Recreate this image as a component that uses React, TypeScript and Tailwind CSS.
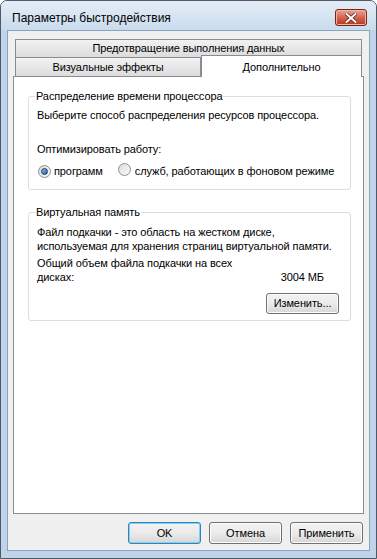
import React from 'react';

const font = { fontFamily: '"Liberation Sans", Arial, sans-serif' };

const Radio = ({ checked }: { checked?: boolean }) => (
  <span className="relative inline-flex h-[13px] w-[13px] shrink-0 items-center justify-center rounded-full border border-[#8f8f8f] bg-gradient-to-br from-[#dcdcdc] to-[#fbfbfb]">
    {checked && (
      <span className="h-[7px] w-[7px] rounded-full border border-[#1b3e6e] bg-gradient-to-br from-[#8fc1ef] to-[#1e5b9e]" />
    )}
  </span>
);

const WinButton = ({ label, focused }: { label: string; focused?: boolean }) => (
  <button
    className={
      'flex h-[22px] w-[73px] items-center justify-center rounded-[3px] border bg-gradient-to-b from-[#f2f2f2] via-[#ebebeb] to-[#d6d6d6] text-[11px] tracking-[-0.1px] text-black ' +
      (focused ? 'border-[#3c7fb1] shadow-[inset_0_0_0_1px_#7fd0ff]' : 'border-[#707070] shadow-[inset_0_0_0_1px_#fcfcfc]')
    }
  >
    {label}
  </button>
);

export default function App() {
  return (
    <div className="h-[559px] w-[377px] whitespace-nowrap bg-white text-[11px] tracking-[-0.1px]" style={font}>
      <div className="flex h-full w-full flex-col rounded-t-[7px] border border-[#4d5a66] bg-[#bfd4ea]">
        {/* title bar */}
        <div className="flex h-[29px] shrink-0 items-start justify-between rounded-t-[6px] bg-gradient-to-b from-[#e4edf7] to-[#c9dbee] pl-[11px] pr-[9px] pt-[8px]">
          <span className="mt-[1px] text-[12px] leading-[16px] tracking-normal text-black">Параметры быстродействия</span>
          <div className="flex h-[17px] w-[32px] items-center justify-center rounded-[3px] border border-[#7a2418] bg-gradient-to-b from-[#e9a394] via-[#d4644e] to-[#b8321c] shadow-[inset_0_0_0_1px_#f0b3a6]">
            <svg width="12" height="10" viewBox="0 0 12 10">
              <path d="M1.5 1 L10.5 9 M10.5 1 L1.5 9" stroke="#5a1a10" strokeWidth="3.4" strokeLinecap="square" />
              <path d="M1.5 1 L10.5 9 M10.5 1 L1.5 9" stroke="#ffffff" strokeWidth="2" strokeLinecap="square" />
            </svg>
          </div>
        </div>

        {/* client */}
        <div className="flex flex-1 flex-col px-[6px] pb-[7px]">
          <div className="flex flex-1 flex-col border border-[#8ba3bd] bg-[#f0f0f0] px-[5px] pb-[6px] pt-[8px]">
            {/* tabs */}
            <div className="px-[2px]">
              <div className="flex h-[18px] items-center justify-center border border-b-0 border-[#898c95] bg-gradient-to-b from-[#f2f2f2] to-[#dcdcdc] text-black">
                Предотвращение выполнения данных
              </div>
              <div className="flex h-[19px] items-end">
                <div className="flex h-[19px] w-[186px] items-center justify-center border border-b-0 border-[#898c95] bg-gradient-to-b from-[#f2f2f2] to-[#dcdcdc] text-black">
                  Визуальные эффекты
                </div>
                <div className="relative z-10 mb-[-1px] flex h-[22px] flex-1 items-start justify-center border border-b-0 border-[#898c95] bg-white pt-[3px] text-black">
                  Дополнительно
                </div>
              </div>
            </div>

            {/* panel */}
            <div className="flex flex-1 flex-col border border-[#898c95] bg-white pl-[14px] pr-[12px] pt-[11px]">
              <fieldset className="min-w-0 rounded-[3px] border border-[#d5dfe5] px-[8px] pb-[11px]">
                <legend className="ml-[-2px] px-[1px] leading-[16px] text-black">Распределение времени процессора</legend>
                <div className="mt-[4px] leading-[14px] text-black">Выберите способ распределения ресурсов процессора.</div>
                <div className="mt-[20px] leading-[14px] text-black">Оптимизировать работу:</div>
                <div className="mt-[8px] flex h-[14px] items-center leading-[14px] text-black">
                  <span className="ml-[1px]">
                    <Radio checked />
                  </span>
                  <span className="ml-[3px]">программ</span>
                  <span className="ml-[15px]">
                    <Radio />
                  </span>
                  <span className="ml-[4px]">служб, работающих в фоновом режиме</span>
                </div>
              </fieldset>

              <fieldset className="mt-[14px] min-w-0 rounded-[3px] border border-[#d5dfe5] px-[8px] pb-[6px]">
                <legend className="ml-[-2px] px-[1px] leading-[16px] text-black">Виртуальная память</legend>
                <div className="mt-[5px] leading-[14px] text-black">
                  Файл подкачки - это область на жестком диске,
                  <br />
                  используемая для хранения страниц виртуальной памяти.
                </div>
                <div className="mt-[3px] flex items-end justify-between pr-[18px] leading-[14px] text-black">
                  <span>
                    Общий объем файла подкачки на всех
                    <br />
                    дисках:
                  </span>
                  <span>3004 МБ</span>
                </div>
                <div className="mt-[9px] flex justify-end pr-[3px]">
                  <button className="flex h-[21px] w-[73px] items-center justify-center rounded-[3px] border border-[#707070] bg-gradient-to-b from-[#f2f2f2] via-[#ebebeb] to-[#d6d6d6] text-black shadow-[inset_0_0_0_1px_#fcfcfc]">
                    Изменить...
                  </button>
                </div>
              </fieldset>
            </div>

            {/* bottom buttons */}
            <div className="mt-[8px] flex justify-end gap-[8px] pr-[1px]">
              <WinButton label="OK" focused />
              <WinButton label="Отмена" />
              <WinButton label="Применить" />
            </div>
          </div>
        </div>
      </div>
    </div>
  );
}
